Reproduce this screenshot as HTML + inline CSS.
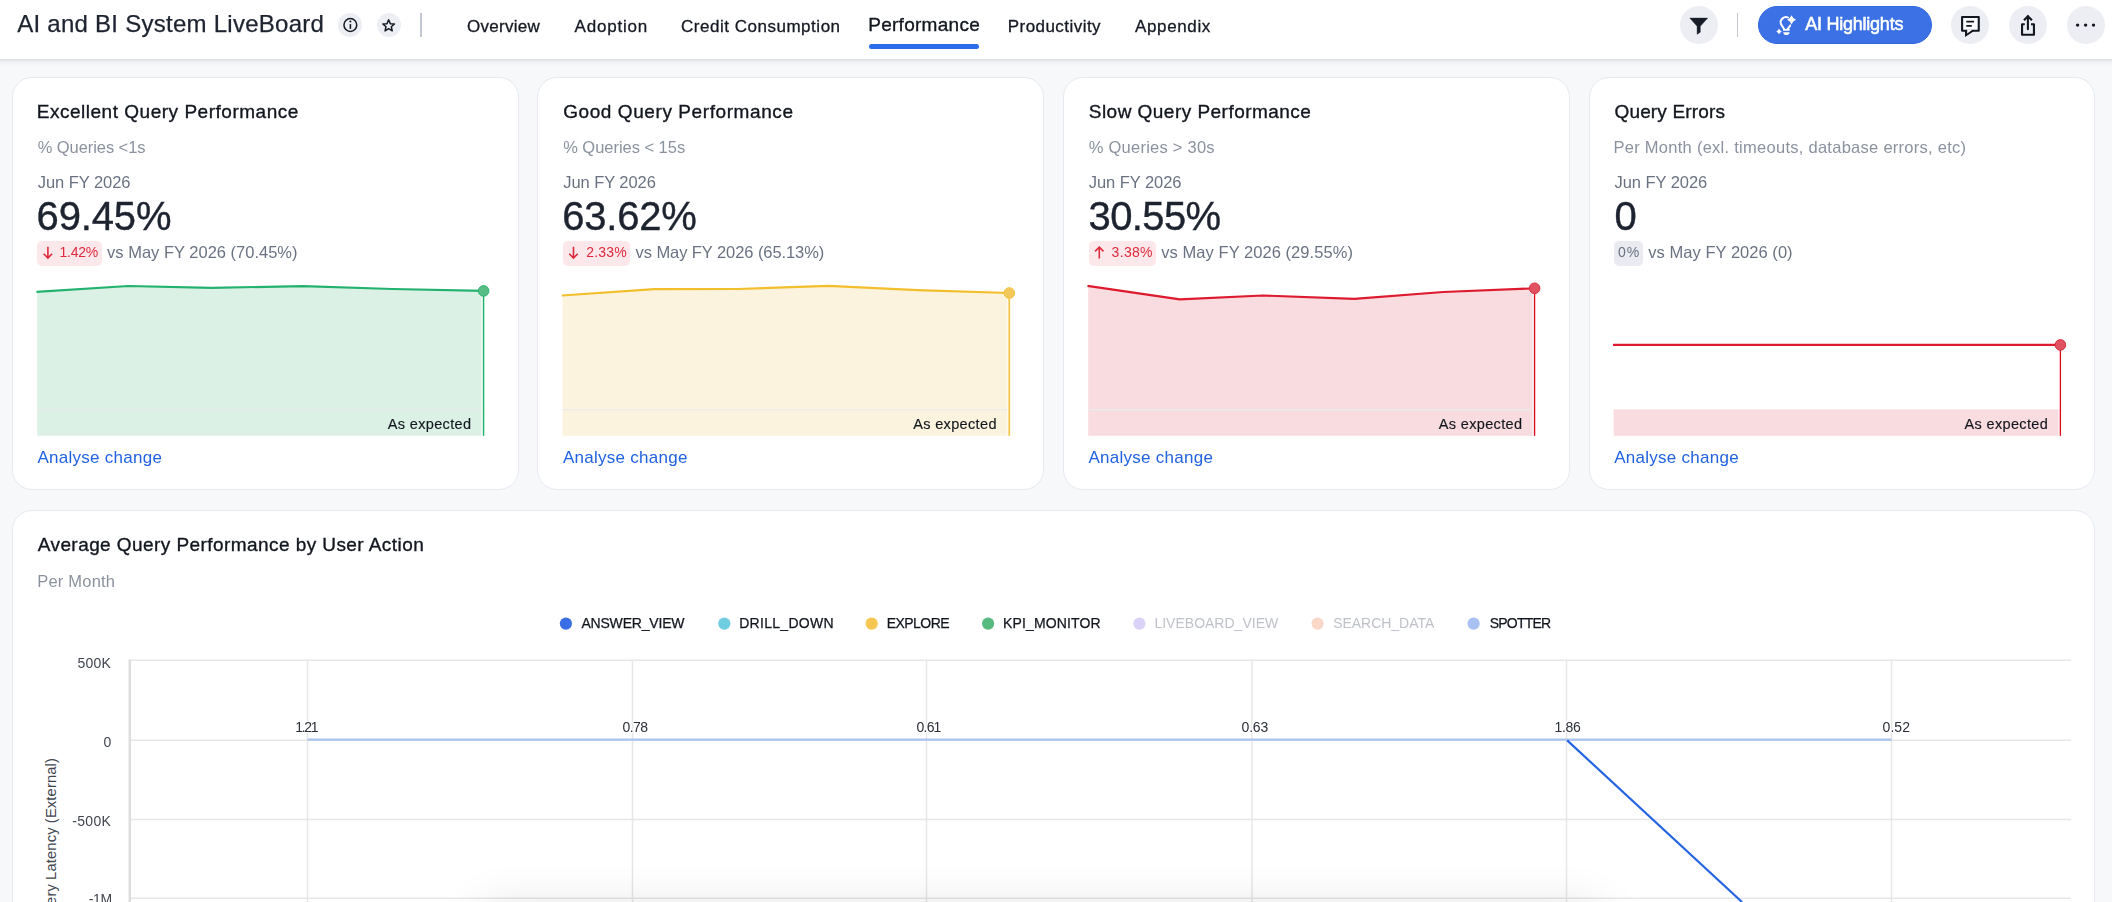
<!DOCTYPE html>
<html><head><meta charset="utf-8"><title>AI and BI System LiveBoard</title>
<style>
html,body{margin:0;padding:0;width:2112px;height:902px;overflow:hidden;background:#f6f8fa}
#root{width:2112px;height:902px;overflow:hidden;position:relative;background:#f6f8fa;font-family:"Liberation Sans",sans-serif}
.t{position:absolute;white-space:pre;line-height:1;font-family:"Liberation Sans",sans-serif}
.a{position:absolute}
svg{position:absolute;overflow:visible}

.hdr{left:0;top:0;width:2112px;height:59px;background:#fff}
.hsh{left:0;top:59px;width:2112px;height:7px;background:linear-gradient(to bottom,#d8dade 0,#e3e5e9 1px,#eaecf0 2px,#eff0f4 3px,#f2f3f6 4px,#f4f5f8 5px,#f6f8fa 7px)}
.card{background:#fff;border:1px solid #e6e9f0;border-radius:20px;box-sizing:border-box}
.ic{border-radius:50%;background:#eceef3}
.badge{border-radius:5px;height:24.6px;top:241.1px}

</style></head><body><div id="root">
<div class="a hdr"></div><div class="a hsh"></div>
<div class="a ic" style="left:338.40px;top:13.20px;width:24px;height:24px"></div>
<div class="a ic" style="left:376.90px;top:13.20px;width:24px;height:24px"></div>
<div class="a ic" style="left:1679.80px;top:6.00px;width:38px;height:38px"></div>
<div class="a ic" style="left:1951.45px;top:6.00px;width:38px;height:38px"></div>
<div class="a ic" style="left:2009.00px;top:6.00px;width:38px;height:38px"></div>
<div class="a ic" style="left:2066.80px;top:6.00px;width:38px;height:38px"></div>
<div class="a" style="left:420.3px;top:13px;width:1.3px;height:24px;background:#c3c7d0"></div>
<div class="a" style="left:1736.8px;top:13.3px;width:1.3px;height:23.6px;background:#c3c7d0"></div>
<div class="a" style="left:869px;top:44.3px;width:110.3px;height:5px;border-radius:2.5px;background:#2b6cee"></div>
<div class="a" style="left:1757.8px;top:6px;width:174px;height:38px;border-radius:19px;background:#3b71e4;box-sizing:border-box;border:1px solid #3169e2"></div>
<div class="a card" style="left:12px;top:77px;width:507px;height:413px"></div>
<div class="a card" style="left:537px;top:77px;width:507px;height:413px"></div>
<div class="a card" style="left:1063px;top:77px;width:507px;height:413px"></div>
<div class="a card" style="left:1589px;top:77px;width:506px;height:413px"></div>
<div class="a card" style="left:12px;top:509.5px;width:2083px;height:500px"></div>
<div class="a badge" style="left:37.3px;width:64.8px;background:#fce8ea"></div>
<div class="a badge" style="left:563.0px;width:66.9px;background:#fce8ea"></div>
<div class="a badge" style="left:1088.75px;width:67.2px;background:#fce8ea"></div>
<div class="a badge" style="left:1614.2px;width:28.7px;background:#e9ebf1"></div>
<div class="t" style="left:51.3px;top:1008px;transform-origin:0 0;transform:rotate(-90deg);font-size:14.8px;color:#41464f;letter-spacing:0.1px;width:250px;text-align:right;height:0;line-height:0">Query Latency (External)</div>
<svg width="2112" height="902" viewBox="0 0 2112 902" style="left:0;top:0">
<circle cx="350.35" cy="25" r="6.4" fill="none" stroke="#151a23" stroke-width="1.5"/>
<circle cx="350.4" cy="21.6" r="1.0" fill="#151a23"/>
<path d="M350.4 24.1V28.9" stroke="#151a23" stroke-width="1.6" stroke-linecap="butt" fill="none"/>
<polygon points="388.65,19.80 390.30,23.63 394.45,24.01 391.31,26.77 392.24,30.84 388.65,28.70 385.06,30.84 385.99,26.77 382.85,24.01 387.00,23.63" fill="none" stroke="#151a23" stroke-width="1.5" stroke-linejoin="round"/>
<path d="M1689.8 18.1H1707.7L1700.3 26.3V32.2L1697.1 34.3V26.3Z" fill="#171c26" stroke="#171c26" stroke-width="0.4" stroke-linejoin="round"/>
<g>
<path d="M1789.2 18.3A5.2 5.2 0 0 0 1781.4 24.9L1784.3 29.2M1791 24.6L1787.6 29.2" stroke="#fff" fill="none" stroke-linecap="round" stroke-linejoin="round" stroke-width="2" />
<rect x="1783" y="29" width="6.7" height="1.75" fill="#fff"/>
<path d="M1783.2 32.2H1789.6C1789.6 33.7 1788.3 35.1 1786.4 35.1C1784.5 35.1 1783.2 33.7 1783.2 32.2Z" fill="#fff"/>
<path d="M1791.55 15.25Q1792.76 18.61 1796.05 19.85Q1792.76 21.09 1791.55 24.45Q1790.34 21.09 1787.05 19.85Q1790.34 18.61 1791.55 15.25Z" fill="#fff" stroke="#3b71e4" stroke-width="1.7" paint-order="stroke"/>
<path d="M1779.05 28.50Q1779.86 30.53 1781.75 31.40Q1779.86 32.27 1779.05 34.30Q1778.24 32.27 1776.35 31.40Q1778.24 30.53 1779.05 28.50Z" fill="#fff"/>
</g>
<path d="M1962.1 16.95H1978.75V30.7H1962.1Z" stroke="#131720" fill="#fbfbfd" stroke-width="2.1" stroke-linejoin="round"/>
<path d="M1965 30.6V37L1974.9 30.6Z" fill="#131720"/>
<path d="M1967.2 29.5V33.5L1972.6 29.5Z" fill="#fbfbfd"/>
<path d="M1966.3 21.6H1974.1M1966.3 25.85H1971.8" stroke="#131720" fill="none" stroke-width="1.7"/>
<path d="M2024.8 24.25H2022.05V34.75H2033.95V24.25H2031" stroke="#131720" fill="none" stroke-width="2.1" stroke-linejoin="round"/>
<path d="M2027.9 29.2V16.4" stroke="#131720" fill="none" stroke-width="2.1" stroke-linecap="round"/>
<path d="M2024 20.2L2027.9 16.2L2031.9 20.2" stroke="#131720" fill="none" stroke-width="2.2" stroke-linejoin="miter" stroke-linecap="butt"/>
<circle cx="2077.6" cy="25.1" r="1.7" fill="#151a23"/>
<circle cx="2085.6" cy="25.1" r="1.7" fill="#151a23"/>
<circle cx="2093.5" cy="25.1" r="1.7" fill="#151a23"/>
<path d="M47.9 246.8V257.79999999999995M43.699999999999996 253.79999999999998L47.9 258.0L52.1 253.79999999999998" stroke="#df2a3c" stroke-width="1.6" fill="none"/>
<path d="M573.5 246.8V257.79999999999995M569.3 253.79999999999998L573.5 258.0L577.7 253.79999999999998" stroke="#df2a3c" stroke-width="1.6" fill="none"/>
<path d="M1099.3 258.4V247.4M1095.1 251.4L1099.3 247.20000000000002L1103.5 251.4" stroke="#df2a3c" stroke-width="1.6" fill="none"/>
<path d="M37.2 291.9 L128.3 286.0 L211.5 287.8 L303.2 286.2 L392.5 289.0 L481.2 290.8 L481.2 435.8 L37.2 435.8 Z" fill="#dcf1e5"/><path d="M481.2 290.8L483.6 290.9V435.8H481.2Z" fill="#dcf1e5" opacity=".5"/><rect x="37.2" y="409" width="444.0" height="1.3" fill="#e9ebef"/><path d="M483.6 290.9V435.8" stroke="#1fb26b" stroke-width="1.4" fill="none"/><path d="M36.5 291.9 L128.3 286.0 L211.5 287.8 L303.2 286.2 L392.5 289.0 L483.6 290.9" stroke="#22b26e" stroke-width="2.2" fill="none" stroke-linejoin="round"/><circle cx="483.6" cy="290.9" r="5.3" fill="#58bc85" stroke="#2eb574" stroke-width="1"/>
<path d="M562.6 295.5 L654.1 289.1 L737.5 289.0 L828.6 285.8 L917.5 290.2 L1006.9 292.9 L1006.9 435.8 L562.6 435.8 Z" fill="#fcf3de"/><path d="M1006.9 292.9L1009.3 293.0V435.8H1006.9Z" fill="#fcf3de" opacity=".5"/><rect x="562.6" y="409" width="444.3" height="1.3" fill="#e9ebef"/><path d="M1009.3 293.0V435.8" stroke="#f3c446" stroke-width="1.7" fill="none"/><path d="M561.9 295.5 L654.1 289.1 L737.5 289.0 L828.6 285.8 L917.5 290.2 L1009.3 293.0" stroke="#f2be2c" stroke-width="2.2" fill="none" stroke-linejoin="round"/><circle cx="1009.3" cy="293.0" r="5.3" fill="#f3c85a" stroke="#f2c036" stroke-width="1"/>
<path d="M1088.2 285.8 L1179.8 299.4 L1262.9 295.5 L1354.3 298.9 L1443.3 292.0 L1532.2 288.4 L1532.2 435.8 L1088.2 435.8 Z" fill="#f8dcdf"/><path d="M1532.2 288.4L1534.6 288.3V435.8H1532.2Z" fill="#f8dcdf" opacity=".5"/><rect x="1088.2" y="409" width="444.0" height="1.3" fill="#e9ebef"/><path d="M1534.6 288.3V435.8" stroke="#dd0a1c" stroke-width="1.3" fill="none"/><path d="M1087.5 285.8 L1179.8 299.4 L1262.9 295.5 L1354.3 298.9 L1443.3 292.0 L1534.6 288.3" stroke="#dd1a2e" stroke-width="2.2" fill="none" stroke-linejoin="round"/><circle cx="1534.6" cy="288.3" r="5.3" fill="#e0525f" stroke="#dc2c3e" stroke-width="1"/>
<rect x="1613.7" y="409.4" width="444.3" height="26.4" fill="#f8dcdf"/><rect x="2058.0" y="409.4" width="2.4" height="26.4" fill="#f8dcdf" opacity=".5"/><path d="M2060.4 344.9V435.8" stroke="#dd0a1c" stroke-width="1.3" fill="none"/><path d="M1613.0 344.9 L2060.4 344.9" stroke="#dd1a2e" stroke-width="2.2" fill="none" stroke-linejoin="round"/><circle cx="2060.4" cy="344.9" r="5.3" fill="#e0525f" stroke="#dc2c3e" stroke-width="1"/>
<circle cx="565.9" cy="623.6" r="6.1" fill="#3a6ee5"/>
<circle cx="724.3" cy="623.6" r="6.1" fill="#6fcde0"/>
<circle cx="871.7" cy="623.6" r="6.1" fill="#f5c652"/>
<circle cx="988.1" cy="623.6" r="6.1" fill="#57bb7f"/>
<circle cx="1139.4" cy="623.6" r="6.1" fill="#dbd2f7"/>
<circle cx="1317.6" cy="623.6" r="6.1" fill="#fad8c8"/>
<circle cx="1473.6" cy="623.6" r="6.1" fill="#a8c0f2"/>
<path d="M129 660.3H2071" stroke="#e7e7e9" stroke-width="1.5" fill="none"/>
<path d="M129 740.3H2071" stroke="#e7e7e9" stroke-width="1.5" fill="none"/>
<path d="M129 819.4H2071" stroke="#e7e7e9" stroke-width="1.5" fill="none"/>
<path d="M129 898.2H2071" stroke="#e7e7e9" stroke-width="1.5" fill="none"/>
<path d="M307.5 660.5V902" stroke="#e7e7e9" stroke-width="1.5" fill="none"/>
<path d="M632.5 660.5V902" stroke="#e7e7e9" stroke-width="1.5" fill="none"/>
<path d="M926.5 660.5V902" stroke="#e7e7e9" stroke-width="1.5" fill="none"/>
<path d="M1252 660.5V902" stroke="#e7e7e9" stroke-width="1.5" fill="none"/>
<path d="M1566.5 660.5V902" stroke="#e7e7e9" stroke-width="1.5" fill="none"/>
<path d="M1891.5 660.5V902" stroke="#e7e7e9" stroke-width="1.5" fill="none"/>
<path d="M129.8 659.6V902" stroke="#dcdcde" stroke-width="2.5" fill="none"/>
<path d="M307.5 739.6H1891.5" stroke="#a9c4ee" stroke-width="2.2" fill="none"/>
<path d="M1567.2 740.4L1742 902" stroke="#2665e2" stroke-width="2.2" fill="none"/>
</svg>
<div class="a" style="left:482px;top:911px;width:1118px;height:60px;border-radius:10px;box-shadow:0 0 50px rgba(0,0,0,.14)"></div>
<div class="a" style="left:0;top:0;width:2112px;height:902px;will-change:transform">
<div class="t" style="left:17.20px;top:12.00px;font-size:24px;letter-spacing:0.260px;color:#1d232f;-webkit-text-stroke:.25px #1d232f;">AI and BI System LiveBoard</div>
<div class="t" style="left:467.00px;top:18.00px;font-size:17px;letter-spacing:0.261px;color:#151922;-webkit-text-stroke:.3px #151922;">Overview</div>
<div class="t" style="left:574.60px;top:18.00px;font-size:17px;letter-spacing:0.778px;color:#151922;-webkit-text-stroke:.3px #151922;">Adoption</div>
<div class="t" style="left:681.00px;top:18.00px;font-size:17px;letter-spacing:0.519px;color:#151922;-webkit-text-stroke:.3px #151922;">Credit Consumption</div>
<div class="t" style="left:868.20px;top:15.00px;font-size:19px;letter-spacing:0.280px;color:#12161e;-webkit-text-stroke:.35px #12161e;">Performance</div>
<div class="t" style="left:1007.75px;top:18.00px;font-size:17px;letter-spacing:0.449px;color:#151922;-webkit-text-stroke:.3px #151922;">Productivity</div>
<div class="t" style="left:1135.00px;top:18.00px;font-size:17px;letter-spacing:0.630px;color:#151922;-webkit-text-stroke:.3px #151922;">Appendix</div>
<div class="t" style="left:1805.20px;top:15.00px;font-size:18px;letter-spacing:-0.237px;color:#fff;-webkit-text-stroke:.55px #fff;">AI Highlights</div>
<div class="t" style="left:36.75px;top:102.00px;font-size:19px;letter-spacing:0.516px;color:#12161e;-webkit-text-stroke:.35px #12161e;">Excellent Query Performance</div>
<div class="t" style="left:37.75px;top:139.00px;font-size:16.5px;letter-spacing:-0.077px;color:#8b929e;">% Queries &lt;1s</div>
<div class="t" style="left:37.75px;top:174.00px;font-size:16.5px;letter-spacing:-0.059px;color:#6a7282;">Jun FY 2026</div>
<div class="t" style="left:36.50px;top:196.00px;font-size:40px;letter-spacing:-0.120px;color:#1d232f;-webkit-text-stroke:.4px #1d232f;">69.45%</div>
<div class="t" style="left:59.50px;top:245.00px;font-size:14px;letter-spacing:-0.237px;color:#df2a3c;">1.42%</div>
<div class="t" style="left:107.10px;top:244.00px;font-size:16.5px;letter-spacing:-0.002px;color:#6a7282;">vs May FY 2026 (70.45%)</div>
<div class="t" style="left:387.75px;top:417.00px;font-size:14.5px;letter-spacing:0.346px;color:#12161e;-webkit-text-stroke:.15px #12161e;">As expected</div>
<div class="t" style="left:37.45px;top:449.00px;font-size:17px;letter-spacing:0.275px;color:#2162e0;">Analyse change</div>
<div class="t" style="left:563.20px;top:102.00px;font-size:19px;letter-spacing:0.582px;color:#12161e;-webkit-text-stroke:.35px #12161e;">Good Query Performance</div>
<div class="t" style="left:563.20px;top:139.00px;font-size:16.5px;letter-spacing:-0.035px;color:#8b929e;">% Queries &lt; 15s</div>
<div class="t" style="left:563.20px;top:174.00px;font-size:16.5px;letter-spacing:-0.059px;color:#6a7282;">Jun FY 2026</div>
<div class="t" style="left:562.20px;top:196.00px;font-size:40px;letter-spacing:-0.200px;color:#1d232f;-webkit-text-stroke:.4px #1d232f;">63.62%</div>
<div class="t" style="left:586.20px;top:245.00px;font-size:14px;letter-spacing:0.188px;color:#df2a3c;">2.33%</div>
<div class="t" style="left:635.60px;top:244.00px;font-size:16.5px;letter-spacing:-0.080px;color:#6a7282;">vs May FY 2026 (65.13%)</div>
<div class="t" style="left:913.20px;top:417.00px;font-size:14.5px;letter-spacing:0.346px;color:#12161e;-webkit-text-stroke:.15px #12161e;">As expected</div>
<div class="t" style="left:562.90px;top:449.00px;font-size:17px;letter-spacing:0.275px;color:#2162e0;">Analyse change</div>
<div class="t" style="left:1088.75px;top:102.00px;font-size:19px;letter-spacing:0.472px;color:#12161e;-webkit-text-stroke:.35px #12161e;">Slow Query Performance</div>
<div class="t" style="left:1088.75px;top:139.00px;font-size:16.5px;letter-spacing:0.244px;color:#8b929e;">% Queries &gt; 30s</div>
<div class="t" style="left:1088.75px;top:174.00px;font-size:16.5px;letter-spacing:-0.059px;color:#6a7282;">Jun FY 2026</div>
<div class="t" style="left:1088.60px;top:196.00px;font-size:40px;letter-spacing:-0.620px;color:#1d232f;-webkit-text-stroke:.4px #1d232f;">30.55%</div>
<div class="t" style="left:1111.60px;top:245.00px;font-size:14px;letter-spacing:0.313px;color:#df2a3c;">3.38%</div>
<div class="t" style="left:1161.30px;top:244.00px;font-size:16.5px;letter-spacing:0.052px;color:#6a7282;">vs May FY 2026 (29.55%)</div>
<div class="t" style="left:1438.75px;top:417.00px;font-size:14.5px;letter-spacing:0.346px;color:#12161e;-webkit-text-stroke:.15px #12161e;">As expected</div>
<div class="t" style="left:1088.45px;top:449.00px;font-size:17px;letter-spacing:0.275px;color:#2162e0;">Analyse change</div>
<div class="t" style="left:1614.50px;top:102.00px;font-size:19px;letter-spacing:0.151px;color:#12161e;-webkit-text-stroke:.35px #12161e;">Query Errors</div>
<div class="t" style="left:1613.50px;top:139.00px;font-size:16.5px;letter-spacing:0.269px;color:#8b929e;">Per Month (exl. timeouts, database errors, etc)</div>
<div class="t" style="left:1614.50px;top:174.00px;font-size:16.5px;letter-spacing:-0.059px;color:#6a7282;">Jun FY 2026</div>
<div class="t" style="left:1614.60px;top:196.00px;font-size:40px;letter-spacing:0.000px;color:#1d232f;-webkit-text-stroke:.4px #1d232f;">0</div>
<div class="t" style="left:1618.00px;top:245.00px;font-size:14px;letter-spacing:0.914px;color:#6a7282;">0%</div>
<div class="t" style="left:1648.30px;top:244.00px;font-size:16.5px;letter-spacing:0.037px;color:#6a7282;">vs May FY 2026 (0)</div>
<div class="t" style="left:1964.50px;top:417.00px;font-size:14.5px;letter-spacing:0.346px;color:#12161e;-webkit-text-stroke:.15px #12161e;">As expected</div>
<div class="t" style="left:1614.20px;top:449.00px;font-size:17px;letter-spacing:0.275px;color:#2162e0;">Analyse change</div>
<div class="t" style="left:37.70px;top:535.00px;font-size:19px;letter-spacing:0.430px;color:#12161e;-webkit-text-stroke:.35px #12161e;">Average Query Performance by User Action</div>
<div class="t" style="left:37.30px;top:573.00px;font-size:16.5px;letter-spacing:0.195px;color:#8b929e;">Per Month</div>
<div class="t" style="left:581.40px;top:616.00px;font-size:14px;letter-spacing:-0.190px;color:#12161e;-webkit-text-stroke:.25px #12161e;">ANSWER_VIEW</div>
<div class="t" style="left:739.20px;top:616.00px;font-size:14px;letter-spacing:0.291px;color:#12161e;-webkit-text-stroke:.25px #12161e;">DRILL_DOWN</div>
<div class="t" style="left:886.70px;top:616.00px;font-size:14px;letter-spacing:-0.550px;color:#12161e;-webkit-text-stroke:.25px #12161e;">EXPLORE</div>
<div class="t" style="left:1003.10px;top:616.00px;font-size:14px;letter-spacing:0.131px;color:#12161e;-webkit-text-stroke:.25px #12161e;">KPI_MONITOR</div>
<div class="t" style="left:1154.40px;top:616.00px;font-size:14px;letter-spacing:0.009px;color:#bec2c8;">LIVEBOARD_VIEW</div>
<div class="t" style="left:1333.20px;top:616.00px;font-size:14px;letter-spacing:-0.035px;color:#bec2c8;">SEARCH_DATA</div>
<div class="t" style="left:1489.80px;top:616.00px;font-size:14px;letter-spacing:-0.801px;color:#12161e;-webkit-text-stroke:.25px #12161e;">SPOTTER</div>
<div class="t" style="left:77.50px;top:656.00px;font-size:14px;letter-spacing:0.214px;color:#40454e;">500K</div>
<div class="t" style="left:103.60px;top:735.00px;font-size:14px;letter-spacing:0.000px;color:#40454e;">0</div>
<div class="t" style="left:72.30px;top:814.00px;font-size:14px;letter-spacing:0.295px;color:#40454e;">-500K</div>
<div class="t" style="left:88.80px;top:892.00px;font-size:14px;letter-spacing:-0.374px;color:#40454e;">-1M</div>
<div class="t" style="left:295.30px;top:720.00px;font-size:14px;letter-spacing:-1.321px;color:#2a2f38;text-shadow:-1px 0 #fff,1px 0 #fff,0 -1px #fff,0 1px #fff,-1px -1px #fff,1px 1px #fff,-1px 1px #fff,1px -1px #fff;">1.21</div>
<div class="t" style="left:622.60px;top:720.00px;font-size:14px;letter-spacing:-0.621px;color:#2a2f38;text-shadow:-1px 0 #fff,1px 0 #fff,0 -1px #fff,0 1px #fff,-1px -1px #fff,1px 1px #fff,-1px 1px #fff,1px -1px #fff;">0.78</div>
<div class="t" style="left:916.60px;top:720.00px;font-size:14px;letter-spacing:-0.821px;color:#2a2f38;text-shadow:-1px 0 #fff,1px 0 #fff,0 -1px #fff,0 1px #fff,-1px -1px #fff,1px 1px #fff,-1px 1px #fff,1px -1px #fff;">0.61</div>
<div class="t" style="left:1241.50px;top:720.00px;font-size:14px;letter-spacing:-0.154px;color:#2a2f38;text-shadow:-1px 0 #fff,1px 0 #fff,0 -1px #fff,0 1px #fff,-1px -1px #fff,1px 1px #fff,-1px 1px #fff,1px -1px #fff;">0.63</div>
<div class="t" style="left:1554.40px;top:720.00px;font-size:14px;letter-spacing:-0.287px;color:#2a2f38;text-shadow:-1px 0 #fff,1px 0 #fff,0 -1px #fff,0 1px #fff,-1px -1px #fff,1px 1px #fff,-1px 1px #fff,1px -1px #fff;">1.86</div>
<div class="t" style="left:1882.60px;top:720.00px;font-size:14px;letter-spacing:0.046px;color:#2a2f38;text-shadow:-1px 0 #fff,1px 0 #fff,0 -1px #fff,0 1px #fff,-1px -1px #fff,1px 1px #fff,-1px 1px #fff,1px -1px #fff;">0.52</div>
</div>
</div></body></html>
